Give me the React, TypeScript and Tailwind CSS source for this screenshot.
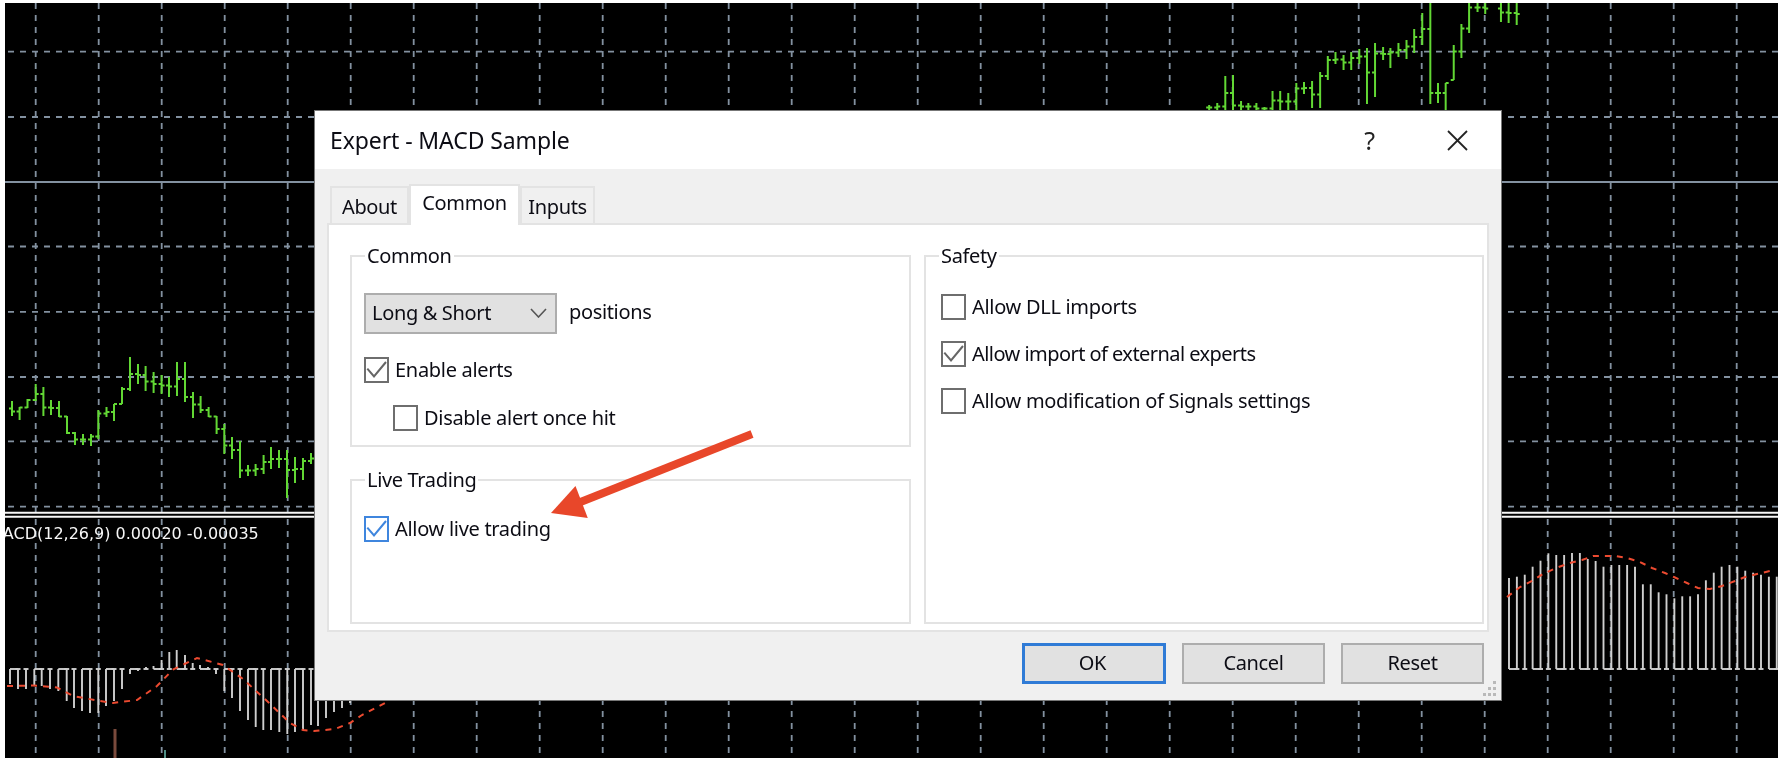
import React from "react";

type B = [number, number, number];

const leftBars: B[] = [
  [12,401,416],[19.6,407,420],[27.5,399,408],[35.7,384,401],[43.4,387,416],[51,400,415],[59,401,417],[67,416,434],[75,432,445],[83,434,445],[91,434,446],[98.3,410,439],[106.5,407,417],[114,404,421],[122,387,404],[130,357,391],[138,364,384],[145.6,366,391],[153.6,372,393],[161.6,375,394],[169,377,397],[177,362,396],[185,362,402],[193,392,418],[200.6,396,413],[208.6,407,417],[216.6,416,434],[224.3,424,454],[232,437,459],[240,441,478],[248,465,476],[255.6,464,476],[263.6,455,474],[271,447,469],[279,450,468],[287,450,498],[295,457,483],[303,458,480],[311,453,464],
];

const rightRaw: [number, number, number][] = [
  [76,105,110],[97,103,110],[118,76,110],[138,75,110],[159,101,110],[178,103,110],[199,103,110],[220,107,110],[241,91,110],[261,91,110],[282,93,110],[303,83,110],[323,82,94],[344,81,108],[365,72,108],[385,56,80],[405,52,64],[426,55,70],[446,52,70],[467,49,64],[487,48,104],[508,43,97],[529,47,60],[548,48,68],[569,43,57],[590,40,59],[610,29,53],[631,13,45],[652,3,104],[672,83,103],[692,83,110],[713,45,80],[733,24,58],[753,3,33],[775,3,12],[795,3,14],[836,3,22],[856,3,23],[877,3,25],
];
const rightBars: B[] = rightRaw.map(([v, a, b]) => [1180 + v / 2.6047, a, b]);

const histLeft: [number, number][] = [
  [10,684],[18,689],[26,689],[34.3,686],[41.7,686],[50,689],[58.3,691],[66.7,701],[74,708],[82,711],[90,713],[98.3,713],[106,706],[114,701],[122,689],[130,674],[138,671],[146,667],[153.5,666],[161.6,660],[169.3,652],[176.7,650],[185,655],[192.7,663],[200,665],[208,667],[216,674],[224.3,691],[232,698],[240,711],[248,720],[255.7,727],[263.3,730],[271,730],[279.3,732],[287.3,734],[295,732],[303,730],[311,725],[318,726],[326,718],[334,712],[342,708],[350,703],
];

const histRightTops = [578,576.7,574.7,566.7,560.7,553.3,555,555,553,553,559,561,566.7,565,565,565,566.7,584.3,584.3,592.3,594.3,598.3,596.3,596.3,594.3,580.3,572.7,566.7,565,566.7,570.7,572.7,574.7,576.7,576.7];

const signalLeft = "7,686 33,685.5 57,687.5 73,696 100,701 113,703 137,700 157,686 173,669.5 197,658 223,665 243,679 267,701 290,723 303,730 314,731 335,729 350,723 362,715 385,703";
const signalRight = "1507,597 1520,587 1532,581 1543,574 1556,568 1570,563 1582,560 1593,556 1603,556 1615,556 1627,558 1640,562 1652,568 1665,573 1674,577 1687,583 1698,588 1710,589 1722,586 1735,581 1745,577 1757,574 1770,571";

const hLines = [51.7, 117, 246.5, 311.8, 377, 441.4, 506.6];

function ohlc(bars: B[]) {
  return bars.map(([x, hi, lo], i) => {
    const next = bars[i + 1];
    const prev = bars[i - 1];
    const closeY = next ? Math.min(lo, Math.max(hi, (Math.max(hi, next[1]) + Math.min(lo, next[2])) / 2)) : (hi + lo) / 2;
    const openY = prev ? Math.min(lo, Math.max(hi, (Math.max(hi, prev[1]) + Math.min(lo, prev[2])) / 2)) : (hi + lo) / 2;
    return (
      <g key={i}>
        <line x1={x} x2={x} y1={hi} y2={lo} />
        <line x1={x - 3} x2={x} y1={openY} y2={openY} />
        <line x1={x} x2={x + 3} y1={closeY} y2={closeY} />
      </g>
    );
  });
}

function ChartDrawing() {
  const vLines = Array.from({ length: 28 }, (_, i) => 35.7 + 63 * i);
  const baseY = 669;
  const rightX = histRightTops.map((_, i) => 1509 + 7.875 * i);
  const stubs = (xs: number[]) =>
    xs.map((x, i) =>
      i % 3 === 0 && xs[i + 1] !== undefined ? (
        <line key={i} x1={x} x2={xs[i + 1]} y1={baseY} y2={baseY} />
      ) : (
        <line key={i} x1={x - 2.5} x2={x + 2.5} y1={baseY} y2={baseY} />
      )
    );
  return (
    <svg className="absolute inset-0" width="1773" height="755" viewBox="5 3 1773 755">
      <g stroke="#8391a0" strokeWidth="1.8" strokeDasharray="6 6">
        {vLines.map((x) => (
          <line key={x} x1={x} x2={x} y1={3} y2={758} />
        ))}
        {hLines.map((y) => (
          <line key={y} x1={8} x2={1778} y1={y} y2={y} />
        ))}
      </g>
      <line x1={5} x2={1778} y1={182} y2={182} stroke="#8391a0" strokeWidth="1.8" />
      <line x1={5} x2={1778} y1={512.7} y2={512.7} stroke="#f7f7f7" strokeWidth="2" />
      <line x1={5} x2={1778} y1={516.7} y2={516.7} stroke="#f7f7f7" strokeWidth="2" />
      <g stroke="#62d834" strokeWidth="2">
        {ohlc(leftBars)}
        {ohlc(rightBars)}
      </g>
      <g stroke="#cfcfcf" strokeWidth="1.9">
        {histLeft.map(([x, y]) => (
          <line key={x} x1={x} x2={x} y1={baseY} y2={y} />
        ))}
        {stubs(histLeft.map(([x]) => x))}
        {histRightTops.map((y, i) => (
          <line key={i} x1={rightX[i]} x2={rightX[i]} y1={baseY} y2={y} />
        ))}
        {stubs(rightX)}
      </g>
      <g fill="none" stroke="#ec4a30" strokeWidth="2" strokeDasharray="6 6">
        <polyline points={signalLeft} />
        <polyline points={signalRight} />
      </g>
      <line x1={115} x2={115} y1={729} y2={758} stroke="#7a4a3c" strokeWidth="3" />
      <line x1={165} x2={165} y1={750} y2={758} stroke="#4f8f86" strokeWidth="2" />
    </svg>
  );
}

function Check({ blue }: { blue?: boolean }) {
  return (
    <svg width="21" height="22" viewBox="2 2 21 22" fill="none">
      <polyline points="3.3,11.6 10,19.5 22,5" stroke={blue ? "#3f86de" : "#666666"} strokeWidth="2" />
    </svg>
  );
}

function Box({ checked, blue }: { checked?: boolean; blue?: boolean }) {
  return (
    <span
      className={
        blue
          ? "flex h-[26px] w-[25px] shrink-0 items-center justify-center border-2 border-[#3f86de] bg-white"
          : "flex h-[26px] w-[25px] shrink-0 items-center justify-center border-2 border-[#6e6e6e] bg-white"
      }
    >
      {checked ? <Check blue={blue} /> : null}
    </span>
  );
}

function CheckRow({ label, checked, blue, className, tight }: { label: string; checked?: boolean; blue?: boolean; className?: string; tight?: boolean }) {
  return (
    <div className={"flex items-center gap-[6px] " + (className ?? "")}>
      <Box checked={checked} blue={blue} />
      <span className={tight ? "whitespace-nowrap text-[20px] leading-[26px] tracking-[-0.55px] text-[#0c0c14]" : "whitespace-nowrap text-[20px] leading-[26px] tracking-[-0.3px] text-[#0c0c14]"}>{label}</span>
    </div>
  );
}

function Group({ title, className, children }: { title: string; className?: string; children: React.ReactNode }) {
  return (
    <div className={"relative border-2 border-[#e3e3e3] " + (className ?? "")}>
      <span className="absolute left-[13px] top-[-14px] bg-white px-[2px] text-[20px] leading-[26px] tracking-[-0.35px] text-[#0c0c14]">{title}</span>
      {children}
    </div>
  );
}

function Btn({ label, primary }: { label: string; primary?: boolean }) {
  return (
    <div
      className={
        primary
          ? "flex h-[41px] w-[144px] items-center justify-center border-[3px] border-[#2f7bd6] bg-[#e1e1e1] pb-[2px] pr-[3px] text-[20px] tracking-[-0.35px] text-[#0c0c14]"
          : "flex h-[41px] w-[143px] items-center justify-center border-2 border-[#adadad] bg-[#e1e1e1] pb-[2px] text-[20px] tracking-[-0.35px] text-[#0c0c14]"
      }
    >
      {label}
    </div>
  );
}

const tabBase = "flex h-[37px] items-center justify-center border-2 border-b-0 border-[#e3e3e3] bg-[#f0f0f0] pt-[2px] text-[20px] tracking-[-0.35px] text-[#0c0c14]";

export default function App() {
  return (
    <div className="flex h-[758px] w-[1782px] bg-white pl-[5px] pr-[4px] pt-[3px] font-['Noto_Sans',sans-serif]">
      <div className="relative flex-1 overflow-hidden bg-black blur-[0.7px]">
        <ChartDrawing />
        <div className="absolute left-[-16px] top-[519px] whitespace-nowrap font-['DejaVu_Sans',sans-serif] text-[16px] leading-[24px] text-[#f7f7f7]">
          MACD(12,26,9) 0.00020 -0.00035
        </div>

        <div className="absolute left-[309px] top-[107px] flex h-[591px] w-[1188px] flex-col border border-[#777777] bg-[#f0f0f0]">
          <div className="flex h-[58px] items-center justify-between bg-white pl-[15px] pr-[33px]">
            <span className="text-[23px] tracking-[-0.1px] text-[#0c0c14]">Expert - MACD Sample</span>
            <div className="flex items-center gap-[72px]">
              <span className="text-[25px] leading-none text-[#222222]">?</span>
              <svg width="21" height="21" viewBox="0 0 21 21" stroke="#222222" strokeWidth="1.8">
                <line x1="1" y1="1" x2="20" y2="20" />
                <line x1="20" y1="1" x2="1" y2="20" />
              </svg>
            </div>
          </div>

          <div className="relative z-10 mt-[15px] flex h-[39px] items-end pl-[15px]">
            <div className={tabBase + " w-[79px]"}>About</div>
            <div className="relative mb-[-2px] flex h-[41px] w-[111px] items-start justify-center border-2 border-b-0 border-[#e3e3e3] bg-white pt-[2px] text-[20px] tracking-[-0.35px] text-[#0c0c14]">Common</div>
            <div className={tabBase + " w-[75px]"}>Inputs</div>
          </div>

          <div className="mx-[12px] grid h-[409px] grid-cols-[561px_560px] gap-x-[13px] border-2 border-[#e3e3e3] bg-white pb-[6px] pl-[21px] pt-[30px]">
            <div className="flex flex-col gap-[32px]">
              <Group title="Common" className="h-[192px] px-[12px] pt-[36px]">
                <div className="flex items-center gap-[12px]">
                  <div className="flex h-[41px] w-[193px] items-center justify-between border-2 border-[#adadad] bg-[#e1e1e1] pb-[2px] pl-[6px] pr-[8px] text-[20px] tracking-[-0.35px] text-[#0c0c14]">
                    <span>Long &amp; Short</span>
                    <svg width="17" height="10" viewBox="0 0 17 10" fill="none" stroke="#555555" strokeWidth="1.6">
                      <polyline points="1,1 8.5,9 16,1" />
                    </svg>
                  </div>
                  <span className="pb-[3px] text-[20px] tracking-[-0.35px] text-[#0c0c14]">positions</span>
                </div>
                <CheckRow label="Enable alerts" checked className="mt-[23px]" />
                <CheckRow label="Disable alert once hit" className="ml-[29px] mt-[22px]" />
              </Group>
              <Group title="Live Trading" className="h-[145px] px-[12px] pt-[35px]">
                <CheckRow label="Allow live trading" checked blue />
              </Group>
            </div>
            <Group title="Safety" className="flex h-[369px] flex-col gap-[21px] px-[15px] pt-[37px]">
              <CheckRow label="Allow DLL imports" />
              <CheckRow label="Allow import of external experts" checked tight />
              <CheckRow label="Allow modification of Signals settings" />
            </Group>
          </div>

          <div className="mt-[11px] flex justify-end gap-[16px] pr-[17px]">
            <Btn label="OK" primary />
            <Btn label="Cancel" />
            <Btn label="Reset" />
          </div>

          <svg className="absolute bottom-[3px] right-[4px]" width="14" height="16" viewBox="0 0 14 16" fill="#b9b9b9">
            <rect x="10" y="0" width="3" height="3" />
            <rect x="5" y="6" width="3" height="3" />
            <rect x="10" y="6" width="3" height="3" />
            <rect x="0" y="12" width="3" height="3" />
            <rect x="5" y="12" width="3" height="3" />
            <rect x="10" y="12" width="3" height="3" />
          </svg>
        </div>

        <svg className="pointer-events-none absolute inset-0" width="1773" height="755" viewBox="5 3 1773 755">
          <line x1="752" y1="434" x2="578" y2="503" stroke="#e8472a" strokeWidth="8" />
          <polygon points="551,513 575.5,486 587.8,518" fill="#e8472a" />
        </svg>
      </div>
    </div>
  );
}
